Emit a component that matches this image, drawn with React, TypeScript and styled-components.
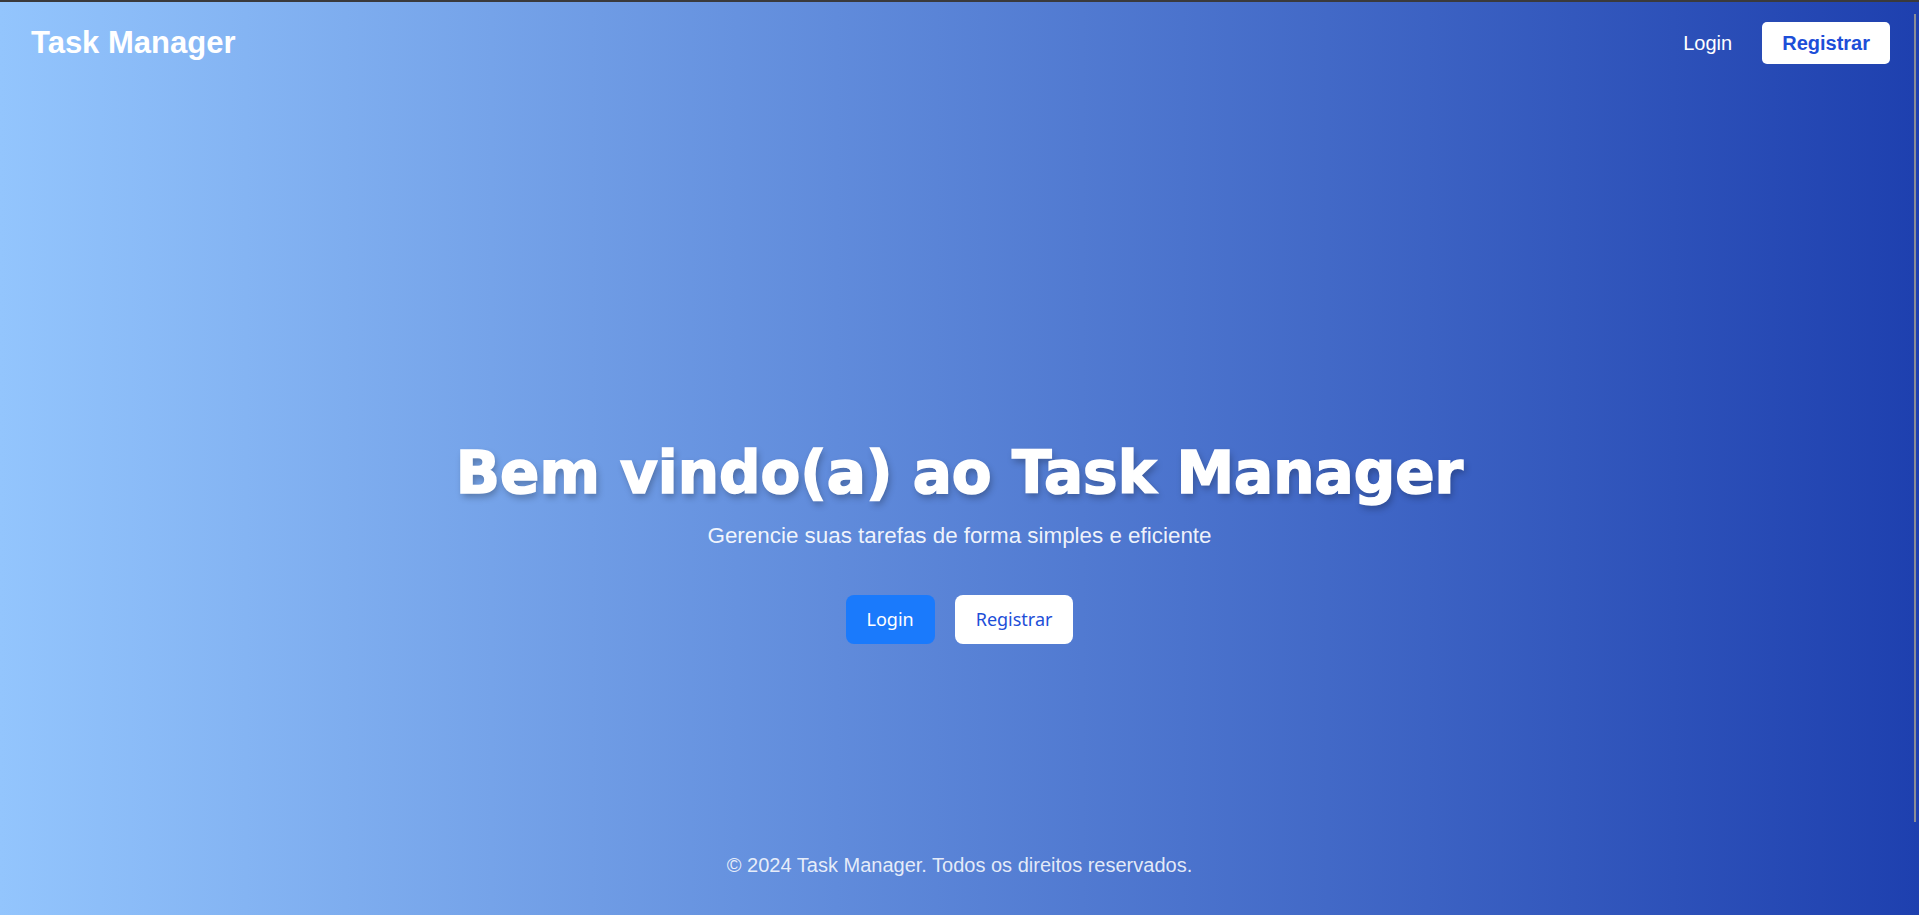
import React from 'react';
import styled, { createGlobalStyle } from 'styled-components';

const GlobalStyle = createGlobalStyle`
  html, body {
    margin: 0;
    padding: 0;
    height: 100%;
    overflow: hidden;
  }

  body {
    font-family: "Liberation Sans", Arial, sans-serif;
  }

  #root {
    height: 100%;
  }
`;

const Page = styled.div`
  display: flex;
  flex-direction: column;
  height: 100vh;
  box-sizing: border-box;
  border-top: 2px solid #3a3a3c;
  background: linear-gradient(to right, #93c5fd, #1e40af);
  color: #fff;
`;

const Header = styled.header`
  display: flex;
  align-items: center;
  justify-content: space-between;
  padding: 20px 29px 20px 31px;
`;

const Logo = styled.div`
  font-size: 31px;
  font-weight: 700;
  line-height: 34px;
`;

const Nav = styled.nav`
  display: flex;
  align-items: center;
  gap: 30px;
`;

const NavLink = styled.a`
  font-size: 20px;
  line-height: 22px;
  color: #fff;
  text-decoration: none;
  cursor: pointer;
`;

const NavButton = styled.button`
  font-family: "Liberation Sans", Arial, sans-serif;
  font-size: 20px;
  font-weight: 700;
  line-height: 22px;
  padding: 10px 20px;
  border: none;
  border-radius: 5px;
  background: #fff;
  color: #1d4ed8;
  cursor: pointer;
`;

const Main = styled.main`
  flex: 1;
  display: flex;
  flex-direction: column;
  align-items: center;
  justify-content: center;
  padding-top: 145px;
  text-align: center;
`;

const Title = styled.h1`
  margin: 0;
  font-family: "DejaVu Sans", "Liberation Sans", sans-serif;
  font-size: 58px;
  font-weight: 700;
  line-height: 68px;
  -webkit-text-stroke: 1.6px #fff;
  text-shadow: 2px 4px 7px rgba(0, 0, 0, 0.28);
`;

const Subtitle = styled.p`
  margin: 15px 0 46px;
  font-size: 22.4px;
  line-height: 27px;
  color: rgba(255, 255, 255, 0.92);
`;

const Actions = styled.div`
  display: flex;
  gap: 20px;
`;

const HeroButton = styled.button<{ primary?: boolean }>`
  font-family: "Noto Sans", "Open Sans", sans-serif;
  font-size: 18px;
  line-height: 25px;
  padding: 12px 21px;
  border: none;
  border-radius: 8px;
  background: ${props => props.primary ? '#1a7afc' : '#fff'};
  color: ${props => props.primary ? '#fff' : '#1d4ed8'};
  cursor: pointer;
`;

const Footer = styled.footer`
  padding: 0 0 38px;
  text-align: center;
  font-size: 20px;
  line-height: 23px;
  color: rgba(255, 255, 255, 0.85);
`;

const ScrollThumb = styled.div`
  position: fixed;
  top: 14px;
  right: 3px;
  width: 2px;
  height: 808px;
  background: #8a8d96;
`;

const App: React.FC = () => {
    return (
        <>
            <GlobalStyle />
            <Page>
                <Header>
                    <Logo>Task Manager</Logo>
                    <Nav>
                        <NavLink>Login</NavLink>
                        <NavButton>Registrar</NavButton>
                    </Nav>
                </Header>
                <Main>
                    <Title>Bem vindo(a) ao Task Manager</Title>
                    <Subtitle>Gerencie suas tarefas de forma simples e eficiente</Subtitle>
                    <Actions>
                        <HeroButton primary>Login</HeroButton>
                        <HeroButton>Registrar</HeroButton>
                    </Actions>
                </Main>
                <Footer>© 2024 Task Manager. Todos os direitos reservados.</Footer>
            </Page>
            <ScrollThumb />
        </>
    );
};

export default App;
